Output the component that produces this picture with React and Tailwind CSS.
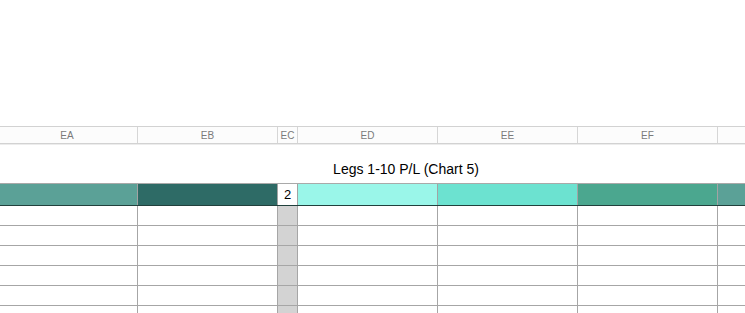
import React from "react";

const cols = [
  { label: "EA", w: "w-[141px]", band: "bg-[#5ba197]" },
  { label: "EB", w: "w-[140px]", band: "bg-[#2e6b66]" },
  { label: "EC", w: "w-[20px]", band: "bg-white" },
  { label: "ED", w: "w-[140px]", band: "bg-[#9af6e9]" },
  { label: "EE", w: "w-[140px]", band: "bg-[#6ce2d0]" },
  { label: "EF", w: "w-[140px]", band: "bg-[#4ba78f]" },
  { label: "", w: "w-[140px]", band: "bg-[#5ba197]" },
];

export default function App() {
  return (
    <div className="w-[745px] h-[313px] overflow-hidden bg-white font-['Liberation_Sans',Arial,sans-serif]">
      <div className="-ml-[3px] w-[900px]">
        <div className="h-[126px]" />

        {/* column letters */}
        <div className="flex h-[18px] border-y border-[#d2d2d2] bg-[#fcfcfc]">
          {cols.map((c, i) => (
            <div
              key={i}
              className={`${c.w} shrink-0 border-r border-[#d6d6d6] flex items-center justify-center text-[10px] text-[#7a7a7a]`}
            >
              {c.label}
            </div>
          ))}
        </div>
        <div className="h-px bg-[#ececec]" />

        {/* title */}
        <div className="h-[38px] flex items-center">
          <div className="w-[199px] shrink-0" />
          <div className="w-[420px] shrink-0 text-center text-[14px] text-black pt-[10px]">
            Legs 1-10 P/L (Chart 5)
          </div>
        </div>

        {/* coloured band */}
        <div className="flex h-[23px] border-t border-[#a9a9a9] border-b border-b-[#21403c]">
          {cols.map((c, i) => (
            <div
              key={i}
              className={`${c.w} ${c.band} shrink-0 border-r border-[#a3a3a3] flex items-center justify-center text-[13px] text-black`}
            >
              {i === 2 ? "2" : ""}
            </div>
          ))}
        </div>

        {/* empty rows */}
        {[0, 1, 2, 3, 4, 5].map((r) => (
          <div key={r} className="flex h-[20px] border-b border-[#a6a6a6]">
            {cols.map((c, i) => (
              <div
                key={i}
                className={`${c.w} shrink-0 border-r border-[#a6a6a6] ${i === 2 ? "bg-[#d3d3d3]" : "bg-white"}`}
              />
            ))}
          </div>
        ))}
      </div>
    </div>
  );
}
